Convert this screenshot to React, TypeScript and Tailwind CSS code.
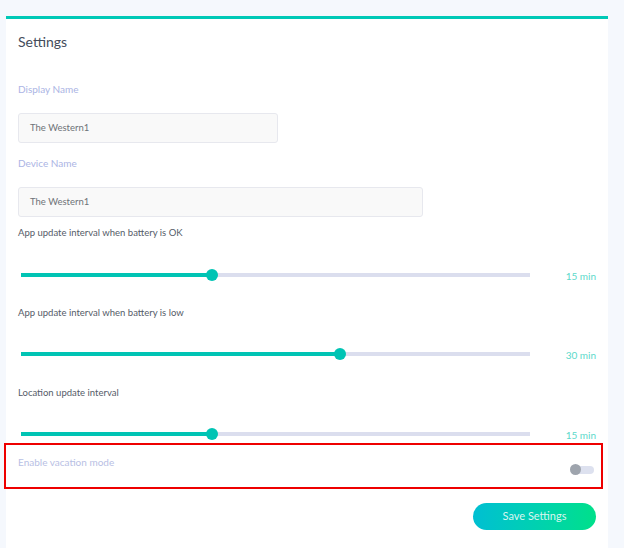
import React from "react";

const font = { fontFamily: "Lato, 'Noto Sans', sans-serif" };

function Slider({ pct, value }: { pct: number; value: string }) {
  return (
    <div className="flex items-center h-[14px]">
      <div className="relative ml-[3px] w-[509px] h-[4px] bg-[#dbdeee]">
        <div className="absolute left-0 top-0 h-full bg-[#00c4b4]" style={{ width: `${pct}%` }} />
        <div
          className="absolute top-1/2 h-[12px] w-[12px] -translate-x-1/2 -translate-y-1/2 rounded-full bg-[#00c4b4]"
          style={{ left: `${pct}%` }}
        />
      </div>
      <span className="ml-auto mt-[1px] text-[10px] leading-[14px] text-[#5cd9ca]">{value}</span>
    </div>
  );
}

export default function App() {
  return (
    <div className="min-h-[548px] bg-[#f5f8fd] pt-[16px] pl-[6px] pr-[16px]" style={font}>
      <div className="min-h-[540px] bg-white border-t-[3px] border-[#00c9b7] px-[12px] pt-[13px]">
        <h1 className="text-[14px] leading-[20px] text-[#444c5b]">Settings</h1>

        <p className="mt-[29px] text-[10px] leading-[16px] text-[#abb4e4]">Display Name</p>
        <div className="mt-[16px] w-[260px] h-[30px] rounded-[3px] border border-[#e7e8ee] bg-[#f9f9f9] px-[11px] flex items-center text-[9.5px] text-[#6f7378]">
          The Western1
        </div>

        <p className="mt-[12px] text-[10px] leading-[16px] text-[#abb4e4]">Device Name</p>
        <div className="mt-[16px] w-[405px] h-[30px] rounded-[3px] border border-[#e7e8ee] bg-[#f9f9f9] px-[11px] flex items-center text-[9.5px] text-[#6f7378]">
          The Western1
        </div>

        <p className="mt-[8px] text-[9.5px] leading-[16px] text-[#555b68]">App update interval when battery is OK</p>
        <div className="mt-[27px]">
          <Slider pct={37.5} value="15 min" />
        </div>

        <p className="mt-[23px] text-[9.5px] leading-[16px] text-[#555b68]">App update interval when battery is low</p>
        <div className="mt-[26px]">
          <Slider pct={62.7} value="30 min" />
        </div>

        <p className="mt-[24px] text-[9.5px] leading-[16px] text-[#555b68]">Location update interval</p>
        <div className="mt-[26px]">
          <Slider pct={37.5} value="15 min" />
        </div>

        <div className="-ml-[14px] -mr-[7px] mt-[2px] h-[46px] border-2 border-[#ee0000] pl-[12px] pr-[7px] flex justify-between">
          <p className="mt-[9px] text-[10px] leading-[16px] text-[#b8c0e4]">Enable vacation mode</p>
          <div className="mt-[19px] relative w-[24px] h-[11px]">
            <div className="absolute right-0 top-[2px] w-[20px] h-[8px] rounded-full bg-[#dde1ef]" />
            <div className="absolute left-0 top-0 w-[11px] h-[11px] rounded-full bg-[#9ea4ad]" />
          </div>
        </div>

        <div className="flex justify-end mt-[14px]">
          <button className="w-[123px] h-[27px] rounded-full bg-gradient-to-r from-[#00bfd2] to-[#00e08a] text-[11px] text-[#d8f6f0]">
            Save Settings
          </button>
        </div>
      </div>
    </div>
  );
}
